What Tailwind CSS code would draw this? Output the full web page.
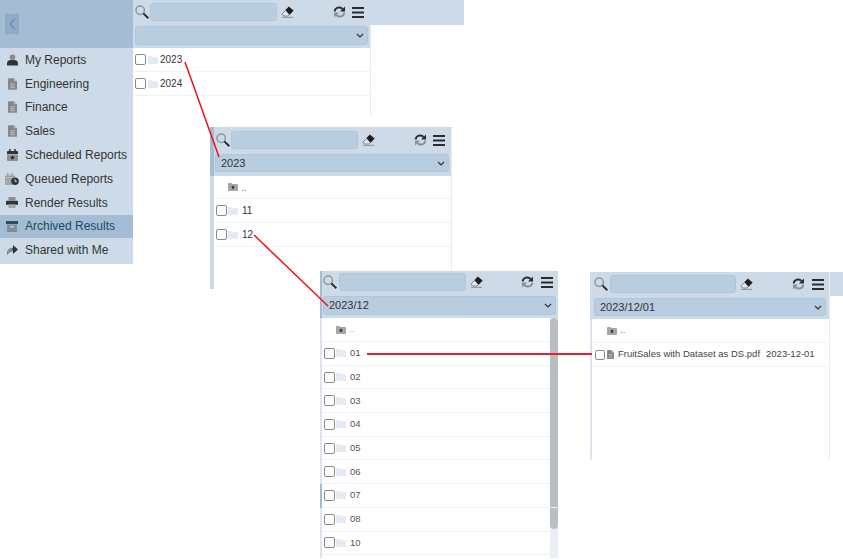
<!DOCTYPE html>
<html lang="en">
  <head>
    <meta charset="UTF-8" />
    <meta name="viewport" content="width=device-width, initial-scale=1.0" />
    <title>Archived Results</title>
    <script src="https://cdn.jsdelivr.net/npm/@tailwindcss/browser@4"></script>
  </head>
  <body class="bg-white">
    <svg class="hidden">
      <symbol id="i-search" viewBox="0 0 14 14"><circle cx="5.2" cy="5.2" r="4.2" fill="none" stroke="#8f959b" stroke-width="1.500"/><path d="M8.400 8.400 13.300 13.300" stroke="#2b2b2b" stroke-width="2"/></symbol>
      <symbol id="i-eraser" viewBox="0 0 13 12"><path d="M.8 8.300 4.800 4.300 8.500 8.500 6.700 10H3z" fill="#dfe7f0" stroke="#7f858b" stroke-width="1"/><path d="M4.500 4 7.800.4 12.600 4.400 8.700 8.700z" fill="#1f1f1f"/><path d="M1 11.300h11" stroke="#8a8f94" stroke-width="1"/></symbol>
      <symbol id="i-refresh" viewBox="0 0 13 12"><path d="M1.600 5.400A4.600 4.600 0 0 1 9.600 3" fill="none" stroke="#2b2b2b" stroke-width="2"/><path d="M12 .4V5.400H7z" fill="#2b2b2b"/><path d="M11.400 6.600A4.600 4.600 0 0 1 3.400 9" fill="none" stroke="#8b9095" stroke-width="2"/><path d="M1 11.600V6.600H6z" fill="#8b9095"/></symbol>
      <symbol id="i-menu" viewBox="0 0 12 11"><path d="M0 1h12M0 5.500h12M0 10h12" stroke="#2b2b2b" stroke-width="1.800"/></symbol>
      <symbol id="i-chev" viewBox="0 0 8 5"><path d="M1 1l3 3 3-3" fill="none" stroke="#333" stroke-width="1.200"/></symbol>
      <symbol id="i-folder" viewBox="0 0 10 8"><path d="M0 1a1 1 0 0 1 1-1h2.500l1 1H9a1 1 0 0 1 1 1v5a1 1 0 0 1-1 1H1a1 1 0 0 1-1-1z" fill="#e4ebf4"/></symbol>
      <symbol id="i-up" viewBox="0 0 10 8"><path d="M0 1a1 1 0 0 1 1-1h2.500l1 1H9a1 1 0 0 1 1 1v5a1 1 0 0 1-1 1H1a1 1 0 0 1-1-1z" fill="#a3a5a8"/><path d="M5 2.500 7 4.500H5.800V6H4.200V4.500H3z" fill="#333"/></symbol>
      <symbol id="i-doc" viewBox="0 0 10 13"><path d="M1 0h5.500L10 3.500V12a1 1 0 0 1-1 1H1a1 1 0 0 1-1-1V1a1 1 0 0 1 1-1z" fill="#83878c"/><path d="M6.500 0 10 3.500H6.500z" fill="#b9bcc0"/><path d="M2.500 6.500h5M2.500 8.500h5M2.500 10.500h5" stroke="#c6cbd1" stroke-width=".9"/></symbol>
      <symbol id="i-user" viewBox="0 0 12 12"><circle cx="6" cy="3" r="3" fill="#85898e"/><path d="M0 12v-2a4 4 0 0 1 4-4h4a4 4 0 0 1 4 4v2z" fill="#2f3438"/></symbol>
      <symbol id="i-cal" viewBox="0 0 11 12"><path d="M0 3a1 1 0 0 1 1-1h9a1 1 0 0 1 1 1v2H0z" fill="#2f3438"/><path d="M2.200 0h1.500v3H2.200zM7.300 0h1.500v3H7.300z" fill="#2f3438"/><path d="M0 5.400h11V11a1 1 0 0 1-1 1H1a1 1 0 0 1-1-1z" fill="#8b8f94"/><path d="m5.500 6.300.7 1.500 1.600.2-1.200 1 .4 1.600-1.500-.8-1.500.8.400-1.600-1.200-1 1.600-.2z" fill="#222"/></symbol>
      <symbol id="i-queue" viewBox="0 0 14 12"><path d="M0 2.500h10v2H0z" fill="#9a9ea3"/><path d="M2 0h1.500v3H2zM6.500 0H8v3H6.500z" fill="#9a9ea3"/><path d="M0 5h10v7H0z" fill="#a3a7ab"/><circle cx="10" cy="8.200" r="3.800" fill="#2f3438"/><path d="M10 6.300v2.100h1.800" stroke="#cddbe9" fill="none"/></symbol>
      <symbol id="i-print" viewBox="0 0 12 11"><path d="M2.500 0h7v3.500h-7z" fill="#8b8f94"/><path d="M1 3.800h10a1 1 0 0 1 1 1V7.800H0V4.800a1 1 0 0 1 1-1z" fill="#2f3438"/><path d="M2.500 7.400h7V11h-7z" fill="#a3a7ab"/></symbol>
      <symbol id="i-archive" viewBox="0 0 12 11"><path d="M0 0h12v3H0z" fill="#22505c"/><path d="M1 3.500h10V11H1z" fill="#7d8d9c"/><path d="M4 5.200h4v1.200H4z" fill="#d5dde6"/></symbol>
      <symbol id="i-share" viewBox="0 0 12 11"><path d="M7 0 12 4.500 7 9V6.300C4.500 6.300 2.500 7.500 1.300 10 .5 6 3 2.900 7 2.700z" fill="#2f3438"/><path d="M6.500 2.800C2.800 3 .5 6 1.300 10 2.300 7.700 4.300 6.400 6.500 6.300z" fill="#8b8f94"/></symbol>
    </svg>

    <div class="relative w-[843px] h-[560px] overflow-hidden text-[#333] text-[11px]" style="font-family: 'Liberation Sans', Arial, sans-serif">
      <!-- window 1: navigation + root folder -->
      <div class="absolute left-0 top-0 w-[371px] h-[116px] border-r border-[#e6edf5]">
        <div class="absolute left-[370px] top-0 w-[94px] h-[25px] bg-[#cddbe9]"></div>
        <div class="h-[48px] bg-[#cddbe9] flex">
          <div class="w-[133px] h-[48px] bg-[#a5bcd5] flex items-center pl-[5px]">
            <div class="w-[14px] h-[20px] bg-[#8fabca] flex items-center justify-center">
              <svg class="w-[7px] h-[12px]" viewBox="0 0 7 12"><path d="M6 1 1 6l5 5" fill="none" stroke="#6f87a0" stroke-width="1.300"/></svg>
            </div>
          </div>
          <div class="flex-1 px-[2px] pt-[3px]">
            <div class="flex items-center h-[18px]">
              <svg class="w-[14px] h-[14px]"><use href="#i-search"/></svg>
              <div class="ml-[1px] w-[127px] h-[18px] bg-[#b9cde0] rounded-[3px] border border-[#b2c6db]"></div>
              <svg class="ml-[4px] w-[13px] h-[12px]"><use href="#i-eraser"/></svg>
              <svg class="ml-[39px] w-[13px] h-[12px]"><use href="#i-refresh"/></svg>
              <svg class="ml-[6px] w-[12px] h-[11px]"><use href="#i-menu"/></svg>
            </div>
            <div class="mt-[5px] h-[19px] bg-[#b9cde0] rounded-[3px] border border-[#b2c6db] flex items-center justify-end pr-[3px]">
              <svg class="w-[8px] h-[5px]"><use href="#i-chev"/></svg>
            </div>
          </div>
        </div>
        <div class="absolute left-0 top-[48px] w-[133px] h-[216px] bg-[#cddbe9] text-[12px] text-[#333]">
          <div class="flex items-center h-[23.800px] pl-[7px]"><svg class="w-[11px] h-[12px]"><use href="#i-user"/></svg><span class="ml-[7px]">My Reports</span></div>
          <div class="flex items-center h-[23.800px] pl-[8px]"><svg class="w-[9px] h-[12px]"><use href="#i-doc"/></svg><span class="ml-[8px]">Engineering</span></div>
          <div class="flex items-center h-[23.800px] pl-[8px]"><svg class="w-[9px] h-[12px]"><use href="#i-doc"/></svg><span class="ml-[8px]">Finance</span></div>
          <div class="flex items-center h-[23.800px] pl-[8px]"><svg class="w-[9px] h-[12px]"><use href="#i-doc"/></svg><span class="ml-[8px]">Sales</span></div>
          <div class="flex items-center h-[23.800px] pl-[7px]"><svg class="w-[11px] h-[12px]"><use href="#i-cal"/></svg><span class="ml-[7px]">Scheduled Reports</span></div>
          <div class="flex items-center h-[23.800px] pl-[5px]"><svg class="w-[14px] h-[12px]"><use href="#i-queue"/></svg><span class="ml-[6px]">Queued Reports</span></div>
          <div class="flex items-center h-[23.800px] pl-[6px]"><svg class="w-[12px] h-[11px]"><use href="#i-print"/></svg><span class="ml-[7px]">Render Results</span></div>
          <div class="flex items-center h-[23.800px] pl-[6px] bg-[#a5bcd5] text-[#154e5c]"><svg class="w-[12px] h-[11px]"><use href="#i-archive"/></svg><span class="ml-[7px]">Archived Results</span></div>
          <div class="flex items-center h-[23.800px] pl-[6px]"><svg class="w-[12px] h-[11px]"><use href="#i-share"/></svg><span class="ml-[7px]">Shared with Me</span></div>
        </div>
        <div class="ml-[133px] text-[10px]">
          <div class="flex items-center h-[24px] border-b border-[#eef3f8] pl-[2px]"><input type="checkbox" class="w-[11px] h-[11px] appearance-none bg-white border border-[#8a8a8a] rounded-[2px]"><svg class="ml-[2px] w-[10px] h-[8px]"><use href="#i-folder"/></svg><span class="ml-[2px]">2023</span></div>
          <div class="flex items-center h-[24px] border-b border-[#eef3f8] pl-[2px]"><input type="checkbox" class="w-[11px] h-[11px] appearance-none bg-white border border-[#8a8a8a] rounded-[2px]"><svg class="ml-[2px] w-[10px] h-[8px]"><use href="#i-folder"/></svg><span class="ml-[2px]">2024</span></div>
        </div>
      </div>

      <!-- window 2: 2023 -->
      <div class="absolute left-[210px] top-[127px] w-[242px] h-[162px] bg-white border-r border-[#e6edf5] border-l-[4px] border-l-[#cddbe9]">
        <div class="h-[49px] bg-[#cddbe9] pt-[4px] -ml-[4px] pl-[1px] border-l-[4px] border-l-[#a5bcd5]">
          <div class="flex items-center h-[18px]">
            <svg class="w-[14px] h-[14px] ml-[1px]"><use href="#i-search"/></svg>
            <div class="ml-[1px] w-[127px] h-[18px] bg-[#b9cde0] rounded-[3px] border border-[#b2c6db]"></div>
            <svg class="ml-[4px] w-[13px] h-[12px]"><use href="#i-eraser"/></svg>
            <svg class="ml-[39px] w-[13px] h-[12px]"><use href="#i-refresh"/></svg>
            <svg class="ml-[6px] w-[12px] h-[11px]"><use href="#i-menu"/></svg>
          </div>
          <div class="mt-[5px] w-[234px] h-[18px] bg-[#b9cde0] rounded-[3px] border border-[#b2c6db] flex items-center justify-between pl-[5px] pr-[3px] text-[11px]">
            <span>2023</span><svg class="w-[8px] h-[5px]"><use href="#i-chev"/></svg>
          </div>
        </div>
        <div class="text-[10px]">
          <div class="flex items-center h-[23px] border-b border-[#eef3f8] pl-[14px]"><svg class="w-[10px] h-[8px]"><use href="#i-up"/></svg><span class="ml-[3px] text-[#777]">..</span></div>
          <div class="flex items-center h-[24px] border-b border-[#eef3f8] pl-[2px]"><input type="checkbox" class="w-[11px] h-[11px] appearance-none bg-white border border-[#8a8a8a] rounded-[2px]"><svg class="ml-[1px] w-[10px] h-[8px]"><use href="#i-folder"/></svg><span class="ml-[4px]">11</span></div>
          <div class="flex items-center h-[24px] border-b border-[#eef3f8] pl-[2px]"><input type="checkbox" class="w-[11px] h-[11px] appearance-none bg-white border border-[#8a8a8a] rounded-[2px]"><svg class="ml-[1px] w-[10px] h-[8px]"><use href="#i-folder"/></svg><span class="ml-[4px]">12</span></div>
        </div>
      </div>

      <!-- window 3: 2023/12 -->
      <div class="absolute left-[320px] top-[271px] w-[238px] h-[287px] bg-white border-l-[2px] border-l-[#dbe6f1]">
        <div class="h-[47px] bg-[#cddbe9] -ml-[2px] pl-[1px] pt-[2px] border-l-[2px] border-l-[#a5bcd5]">
          <div class="flex items-center h-[18px]">
            <svg class="w-[14px] h-[14px]"><use href="#i-search"/></svg>
            <div class="ml-[2px] w-[127px] h-[18px] bg-[#b9cde0] rounded-[3px] border border-[#b2c6db]"></div>
            <svg class="ml-[4px] w-[13px] h-[12px]"><use href="#i-eraser"/></svg>
            <svg class="ml-[38px] w-[13px] h-[12px]"><use href="#i-refresh"/></svg>
            <svg class="ml-[7px] w-[12px] h-[11px]"><use href="#i-menu"/></svg>
          </div>
          <div class="mt-[5px] w-[233px] h-[19px] bg-[#b9cde0] rounded-[3px] border border-[#b2c6db] flex items-center justify-between pl-[5px] pr-[3px] text-[11px]">
            <span>2023/12</span><svg class="w-[8px] h-[5px]"><use href="#i-chev"/></svg>
          </div>
        </div>
        <div class="relative text-[9.500px] text-[#555]">
          <div class="absolute right-0 top-0 w-[8px] h-[240px] bg-[#e9eff6]"><div class="w-[8px] h-[211px] bg-[#b9bec4] rounded-[4px]"></div></div>
          <div class="flex items-center h-[24px] border-b border-[#eef3f8] pl-[14px]"><svg class="w-[10px] h-[8px]"><use href="#i-up"/></svg><span class="ml-[3px] text-[#aaa]">..</span></div>
          <div class="flex items-center h-[23.700px] border-b border-[#eef3f8] pl-[2px]"><input type="checkbox" class="w-[11px] h-[11px] appearance-none bg-white border border-[#8a8a8a] rounded-[2px]"><svg class="ml-[1px] w-[10px] h-[8px]"><use href="#i-folder"/></svg><span class="ml-[4px]">01</span></div>
          <div class="flex items-center h-[23.700px] border-b border-[#eef3f8] pl-[2px]"><input type="checkbox" class="w-[11px] h-[11px] appearance-none bg-white border border-[#8a8a8a] rounded-[2px]"><svg class="ml-[1px] w-[10px] h-[8px]"><use href="#i-folder"/></svg><span class="ml-[4px]">02</span></div>
          <div class="flex items-center h-[23.700px] border-b border-[#eef3f8] pl-[2px]"><input type="checkbox" class="w-[11px] h-[11px] appearance-none bg-white border border-[#8a8a8a] rounded-[2px]"><svg class="ml-[1px] w-[10px] h-[8px]"><use href="#i-folder"/></svg><span class="ml-[4px]">03</span></div>
          <div class="flex items-center h-[23.700px] border-b border-[#eef3f8] pl-[2px]"><input type="checkbox" class="w-[11px] h-[11px] appearance-none bg-white border border-[#8a8a8a] rounded-[2px]"><svg class="ml-[1px] w-[10px] h-[8px]"><use href="#i-folder"/></svg><span class="ml-[4px]">04</span></div>
          <div class="flex items-center h-[23.700px] border-b border-[#eef3f8] pl-[2px]"><input type="checkbox" class="w-[11px] h-[11px] appearance-none bg-white border border-[#8a8a8a] rounded-[2px]"><svg class="ml-[1px] w-[10px] h-[8px]"><use href="#i-folder"/></svg><span class="ml-[4px]">05</span></div>
          <div class="flex items-center h-[23.700px] border-b border-[#eef3f8] pl-[2px]"><input type="checkbox" class="w-[11px] h-[11px] appearance-none bg-white border border-[#8a8a8a] rounded-[2px]"><svg class="ml-[1px] w-[10px] h-[8px]"><use href="#i-folder"/></svg><span class="ml-[4px]">06</span></div>
          <div class="relative flex items-center h-[23.700px] border-b border-[#eef3f8] pl-[2px]"><div class="absolute -left-[2px] top-0 w-[2px] h-[24px] bg-[#a5bcd5]"></div><input type="checkbox" class="w-[11px] h-[11px] appearance-none bg-white border border-[#8a8a8a] rounded-[2px]"><svg class="ml-[1px] w-[10px] h-[8px]"><use href="#i-folder"/></svg><span class="ml-[4px]">07</span></div>
          <div class="flex items-center h-[23.700px] border-b border-[#eef3f8] pl-[2px]"><input type="checkbox" class="w-[11px] h-[11px] appearance-none bg-white border border-[#8a8a8a] rounded-[2px]"><svg class="ml-[1px] w-[10px] h-[8px]"><use href="#i-folder"/></svg><span class="ml-[4px]">08</span></div>
          <div class="flex items-center h-[23.700px] border-b border-[#eef3f8] pl-[2px]"><input type="checkbox" class="w-[11px] h-[11px] appearance-none bg-white border border-[#8a8a8a] rounded-[2px]"><svg class="ml-[1px] w-[10px] h-[8px]"><use href="#i-folder"/></svg><span class="ml-[4px]">10</span></div>
        </div>
      </div>

      <!-- window 4: 2023/12/01 -->
      <div class="absolute left-[590px] top-[272px] w-[240px] h-[188px] bg-white border-r border-[#e6edf5] border-l-[2px] border-l-[#dbe6f1]">
        <div class="absolute left-[238px] top-0 w-[13px] h-[24px] bg-[#cddbe9]"></div>
        <div class="h-[47px] bg-[#cddbe9] -ml-[2px] pl-[4px] pt-[3px]">
          <div class="flex items-center h-[18px]">
            <svg class="w-[14px] h-[14px]"><use href="#i-search"/></svg>
            <div class="ml-[2px] w-[126px] h-[18px] bg-[#b9cde0] rounded-[3px] border border-[#b2c6db]"></div>
            <svg class="ml-[4px] w-[13px] h-[12px]"><use href="#i-eraser"/></svg>
            <svg class="ml-[39px] w-[13px] h-[12px]"><use href="#i-refresh"/></svg>
            <svg class="ml-[7px] w-[12px] h-[11px]"><use href="#i-menu"/></svg>
          </div>
          <div class="mt-[5px] w-[232px] h-[18px] bg-[#b9cde0] rounded-[3px] border border-[#b2c6db] flex items-center justify-between pl-[5px] pr-[3px] text-[11px]">
            <span>2023/12/01</span><svg class="w-[8px] h-[5px]"><use href="#i-chev"/></svg>
          </div>
        </div>
        <div class="text-[9.500px]">
          <div class="flex items-center h-[24px] border-b border-[#eef3f8] pl-[15px]"><svg class="w-[10px] h-[8px]"><use href="#i-up"/></svg><span class="ml-[3px] text-[#777]">..</span></div>
          <div class="flex items-center h-[24px] border-b border-[#eef3f8] pl-[3px] whitespace-nowrap"><input type="checkbox" class="w-[10px] h-[10px] appearance-none bg-white border border-[#8a8a8a] rounded-[2px]"><svg class="ml-[2px] w-[7px] h-[9px]"><use href="#i-doc"/></svg><span class="ml-[4px] text-[#444]">FruitSales with Dataset as DS.pdf</span><span class="ml-[6px] text-[#444]">2023-12-01</span></div>
        </div>
      </div>

      <!-- red connectors -->
      <svg class="absolute left-0 top-0 w-[843px] h-[560px] pointer-events-none" viewBox="0 0 843 560">
        <path d="M185 62 219 157M254 235 328 306" fill="none" stroke="#f0101a" stroke-width="1.500"/>
        <path d="M367 354H592" fill="none" stroke="#e8202a" stroke-width="2"/>
      </svg>
    </div>
  </body>
</html>
